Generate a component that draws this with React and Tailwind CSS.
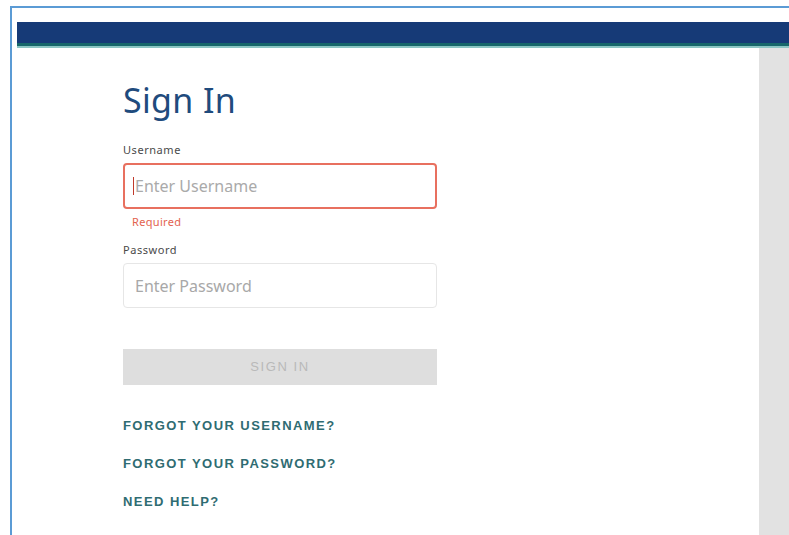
import React, { useState } from 'react';

export default function App() {
  const [username, setUsername] = useState('');
  const [password, setPassword] = useState('');

  const links = ['FORGOT YOUR USERNAME?', 'FORGOT YOUR PASSWORD?', 'NEED HELP?'];

  return (
    <div className="w-[789px] h-[535px] overflow-hidden bg-white pt-[6px] pl-[10px]">
      <div className="h-full border-l-2 border-t-2 border-[#5b9bd5] pl-[5px] pt-[14px] flex flex-col">
        {/* top bar */}
        <div className="h-[21px] bg-[#163a77]" />
        <div className="h-[3px] bg-[#17676b]" />
        <div className="h-[2px] bg-[#8cc6c4]" />

        <div className="flex flex-1">
          <main className="flex-1 pl-[106px] pt-[32px]" style={{ fontFamily: '"Noto Sans", "Liberation Sans", sans-serif' }}>
            <h1 className="text-[34px] leading-[40px] text-[#1f4b7d] tracking-[0.01em]">Sign In</h1>

            <form className="w-[314px] mt-[23px]" onSubmit={e => e.preventDefault()}>
              <label className="block text-[11px] leading-[14px] tracking-[0.05em] text-[#4a4a4a] mb-[6px]">Username</label>
              <div className="relative">
                <input
                  type="text"
                  value={username}
                  onChange={e => setUsername(e.target.value)}
                  placeholder="Enter Username"
                  className="w-full h-[46px] rounded-[4px] border-2 border-[#e8705f] px-[10px] text-[16px] text-[#333] placeholder:text-[#aaaaaa] outline-none"
                />
                {/* text caret of the focused field */}
                {username === '' && <span className="absolute left-[10px] top-[14px] w-[1px] h-[18px] bg-[#c0392b]" />}
              </div>
              <p className="pl-[9px] text-[11px] leading-[14px] tracking-[0.03em] text-[#e3624f] mt-[6px]">Required</p>

              <label className="block text-[11px] leading-[14px] tracking-[0.05em] text-[#4a4a4a] mt-[14px] mb-[6px]">Password</label>
              <input
                type="password"
                value={password}
                onChange={e => setPassword(e.target.value)}
                placeholder="Enter Password"
                className="w-full h-[45px] rounded-[4px] border border-[#e6e6e6] px-[11px] text-[16px] text-[#333] placeholder:text-[#a8a8a8] outline-none"
              />

              <button
                type="submit"
                disabled
                className="w-full h-[36px] mt-[41px] bg-[#dedede] text-[#b9b9b9] text-[13px] tracking-[0.12em]"
                style={{ fontFamily: '"Liberation Sans", sans-serif' }}
              >
                SIGN IN
              </button>
            </form>

            <ul className="mt-[33px] flex flex-col gap-[23px]" style={{ fontFamily: '"Liberation Sans", sans-serif' }}>
              {links.map(l => (
                <li key={l} className="leading-[14px]">
                  <a href="#" className="text-[13px] leading-[14px] font-bold tracking-[0.11em] text-[#2f6c72]">
                    {l}
                  </a>
                </li>
              ))}
            </ul>
          </main>

          {/* right side panel */}
          <aside className="w-[30px] bg-[#e2e2e2]" />
        </div>
      </div>
    </div>
  );
}
